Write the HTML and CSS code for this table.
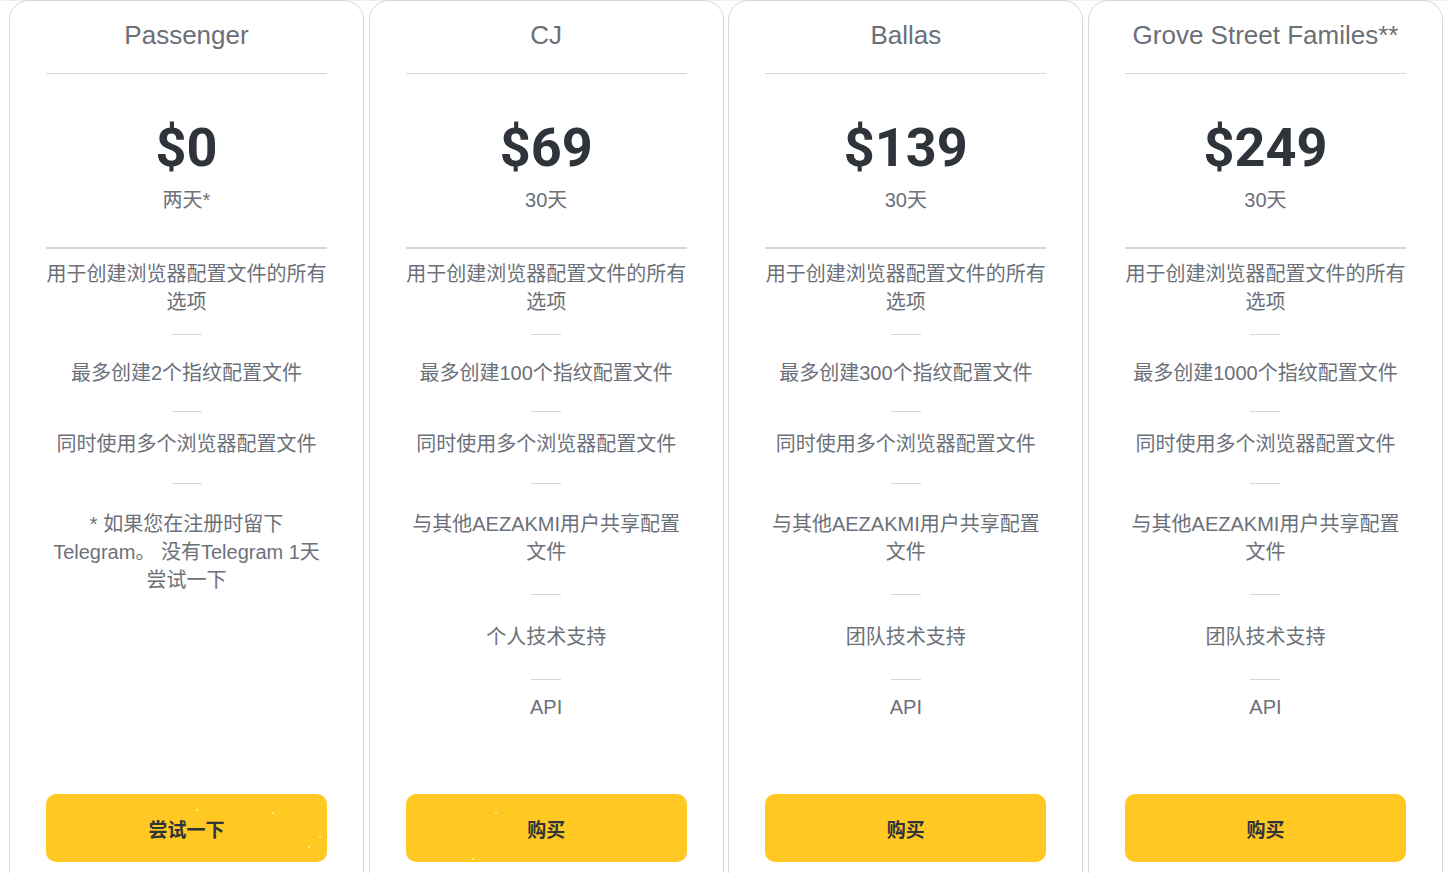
FILE: index.html
```html
<!DOCTYPE html>
<html lang="zh">
<head>
<meta charset="utf-8">
<title>Pricing</title>
<link rel="stylesheet" href="styles.css">
</head>
<body>
<div class="page">
  <div class="plans">
    <div class="card">
      <div class="card-head">Passenger</div>
      <div class="price-box">
        <div class="price">$0</div>
        <div class="period">两天*</div>
      </div>
      <ul class="features">
        <li>用于创建浏览器配置文件的所有选项</li>
        <li>最多创建2个指纹配置文件</li>
        <li>同时使用多个浏览器配置文件</li>
        <li>* 如果您在注册时留下<br>Telegram。 没有Telegram 1天<br>尝试一下</li>
      </ul>
      <button class="btn">尝试一下<span class="spark s1"></span><span class="spark s2"></span><span class="spark s3"></span><span class="spark s4"></span></button>
    </div>
    <div class="card">
      <div class="card-head">CJ</div>
      <div class="price-box">
        <div class="price">$69</div>
        <div class="period">30天</div>
      </div>
      <ul class="features">
        <li>用于创建浏览器配置文件的所有选项</li>
        <li>最多创建100个指纹配置文件</li>
        <li>同时使用多个浏览器配置文件</li>
        <li>与其他AEZAKMI用户共享配置文件</li>
        <li>个人技术支持</li>
        <li>API</li>
      </ul>
      <button class="btn">购买<span class="spark s5"></span><span class="spark s6"></span></button>
    </div>
    <div class="card">
      <div class="card-head">Ballas</div>
      <div class="price-box">
        <div class="price">$139</div>
        <div class="period">30天</div>
      </div>
      <ul class="features">
        <li>用于创建浏览器配置文件的所有选项</li>
        <li>最多创建300个指纹配置文件</li>
        <li>同时使用多个浏览器配置文件</li>
        <li>与其他AEZAKMI用户共享配置文件</li>
        <li>团队技术支持</li>
        <li>API</li>
      </ul>
      <button class="btn">购买</button>
    </div>
    <div class="card">
      <div class="card-head">Grove Street Familes**</div>
      <div class="price-box">
        <div class="price">$249</div>
        <div class="period">30天</div>
      </div>
      <ul class="features">
        <li>用于创建浏览器配置文件的所有选项</li>
        <li>最多创建1000个指纹配置文件</li>
        <li>同时使用多个浏览器配置文件</li>
        <li>与其他AEZAKMI用户共享配置文件</li>
        <li>团队技术支持</li>
        <li>API</li>
      </ul>
      <button class="btn">购买</button>
    </div>
  </div>
</div>
</body>
</html>
```

FILE: styles.css
```css
html, body {
  margin: 0;
  padding: 0;
  overflow: hidden;
  background: #ffffff;
}

body {
  font-family: "Liberation Sans", Arial, "Noto Sans CJK SC", sans-serif;
  color: #6c7079;
}

.page {
  border-top: 1px solid #e3f3f6;
}

.plans {
  display: grid;
  grid-template-columns: repeat(4, 1fr);
  gap: 4.67px;
  padding: 0 6px 0 9px;
  margin-top: -1px;
}

.card {
  box-sizing: border-box;
  height: 920px;
  border: 1px solid #d6d8df;
  border-radius: 20px;
  padding: 19px 36px 57px;
  display: flex;
  flex-direction: column;
  background: #fff;
}

.card-head {
  font-size: 26px;
  line-height: 30px;
  text-align: center;
  color: #6b6f77;
  padding-bottom: 23px;
  border-bottom: 1px solid #d3d5dc;
}

.price-box {
  text-align: center;
  padding-top: 44px;
  padding-bottom: 33px;
  border-bottom: 2px solid #d3d5dc;
}

.price {
  font-family: Roboto, "Liberation Sans", sans-serif;
  font-weight: 700;
  font-size: 54px;
  line-height: 60px;
  color: #2f333a;
}

.period {
  margin-top: 8px;
  font-size: 20px;
  line-height: 28px;
  color: #6c7079;
}

.features {
  list-style: none;
  margin: 11px 0 0;
  padding: 0;
  flex: 1;
}

.features li {
  font-size: 20px;
  line-height: 28px;
  text-align: center;
  color: #6c7079;
}

.features li + li::before {
  content: "";
  display: block;
  width: 30px;
  height: 1px;
  margin: 0 auto;
  background: #d3d6de;
}

.features li:nth-child(2) { margin-top: 18px; }
.features li:nth-child(2)::before { margin-bottom: 24px; }
.features li:nth-child(3) { margin-top: 24px; }
.features li:nth-child(3)::before { margin-bottom: 18px; }
.features li:nth-child(4) { margin-top: 25px; }
.features li:nth-child(4)::before { margin-bottom: 26px; }
.features li:nth-child(5) { margin-top: 28px; }
.features li:nth-child(5)::before { margin-bottom: 28px; }
.features li:nth-child(6) { margin-top: 28px; }
.features li:nth-child(6)::before { margin-bottom: 13px; }

.btn {
  position: relative;
  display: block;
  width: 100%;
  height: 68px;
  border: none;
  border-radius: 10px;
  background: #ffc823;
  font-family: "Noto Sans CJK SC", sans-serif;
  font-weight: 700;
  font-size: 19px;
  color: #2f333a;
  cursor: pointer;
  overflow: hidden;
}

.spark {
  position: absolute;
  width: 2px;
  height: 2px;
  border-radius: 50%;
  background: #fff6a8;
}

.s1 { left: 150px; top: 15px; }
.s2 { left: 226px; top: 18px; }
.s3 { left: 273px; top: 42px; }
.s4 { left: 262px; top: 52px; }
.s5 { left: 89px; top: 18px; }
.s6 { left: 66px; top: 64px; }
```
